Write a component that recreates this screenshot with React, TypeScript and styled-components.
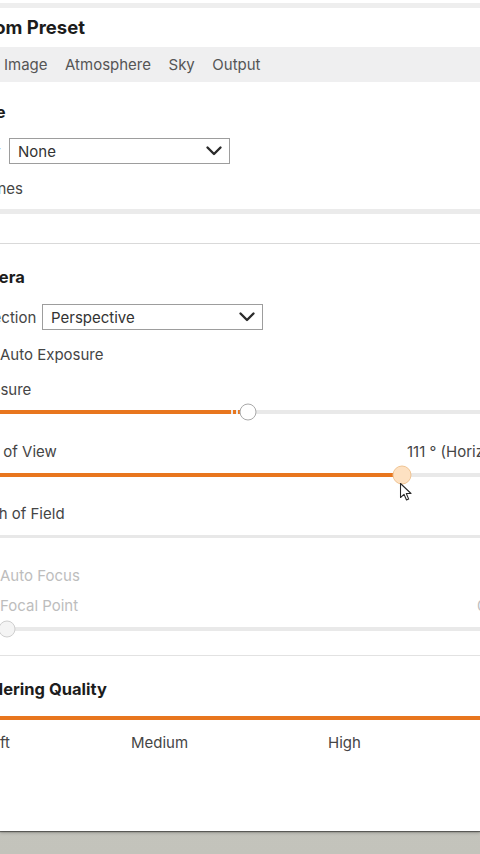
import React from 'react';
import styled, { createGlobalStyle } from 'styled-components';

const ORANGE = '#e8761e';

const GlobalStyle = createGlobalStyle`
    html, body {
        margin: 0;
        padding: 0;
        height: 100%;
        overflow: hidden;
    }
    body {
        background: linear-gradient(180deg, #b9b9b1 0%, #cfcfc7 40%, #c3c3bb 100%);
        font-family: Inter, 'Noto Sans', Arial, sans-serif;
    }
`;

const Panel = styled.div`
    width: 480px;
    height: 831px;
    background: #fff;
    overflow: hidden;
    box-shadow: 0 1px 1px rgba(0, 0, 0, 0.45), 0 2px 3px rgba(0, 0, 0, 0.2);
`;

// the panel is scrolled sideways, so the content starts left of the window
const Content = styled.div`
    width: 540px;
    margin-left: -40px;
    display: flex;
    flex-direction: column;
`;

const TopBand = styled.div`
    height: 5px;
    margin-top: 3px;
    background: #eeeeee;
`;

const Title = styled.h1`
    margin: 7px 0 0 -8px;
    font-size: 18.5px;
    font-weight: 700;
    line-height: 24px;
    color: #1c1c1c;
    white-space: nowrap;
`;

const TabBar = styled.div`
    display: flex;
    align-items: center;
    height: 35px;
    margin-top: 8px;
    padding-left: 35px;
    background: #efeff0;
`;

const Tab = styled.div`
    padding: 0 8.5px 0 9px;
    font-size: 15px;
    color: #555;
    white-space: nowrap;
`;

const SectionTitle = styled.h2<{ $mt: number; $indent?: number }>`
    margin: ${p => p.$mt}px 0 0;
    padding-left: ${p => p.$indent ?? 4}px;
    font-size: 16.5px;
    font-weight: 700;
    line-height: 24px;
    color: #1c1c1c;
    white-space: nowrap;
`;

const Row = styled.div<{ $mt: number; $h?: number }>`
    display: flex;
    align-items: center;
    height: ${p => p.$h ?? 24}px;
    margin-top: ${p => p.$mt}px;
    padding-left: 5px;
    white-space: nowrap;
`;

const SplitRow = styled.div<{ $mt: number; $split: number }>`
    display: grid;
    grid-template-columns: ${p => p.$split}px 1fr;
    align-items: center;
    height: 24px;
    margin-top: ${p => p.$mt}px;
    white-space: nowrap;
`;

const Label = styled.span<{ $w?: number; $muted?: boolean; $indent?: number }>`
    display: inline-block;
    ${p => (p.$w ? `width: ${p.$w}px;` : '')}
    padding-left: ${p => p.$indent ?? 0}px;
    font-size: 15px;
    color: ${p => (p.$muted ? '#bdbdbd' : '#454545')};
`;

const Value = styled.span<{ $muted?: boolean }>`
    font-size: 15px;
    color: ${p => (p.$muted ? '#bdbdbd' : '#454545')};
`;

const SelectBox = styled.div`
    box-sizing: border-box;
    width: 221px;
    height: 26px;
    display: flex;
    align-items: center;
    justify-content: space-between;
    padding: 0 6px 0 8px;
    border: 1px solid #9d9d9d;
    background: #fff;
    font-size: 15px;
    color: #333;
`;

const Switch = styled.span`
    width: 30px;
    height: 16px;
    margin-right: 5px;
    border-radius: 8px;
    background: #d6d6d6;
`;

const ThickRule = styled.div<{ $mt: number }>`
    height: 5px;
    margin-top: ${p => p.$mt}px;
    background: #ebebeb;
`;

const Rule = styled.div<{ $mt: number; $h?: number; $color?: string }>`
    height: ${p => p.$h ?? 1}px;
    margin-top: ${p => p.$mt}px;
    background: ${p => p.$color ?? '#dedede'};
`;

const SliderWrap = styled.div<{ $mt: number }>`
    position: relative;
    height: 18px;
    margin: ${p => p.$mt}px 0 0 5px;
`;

const Rail = styled.div`
    position: absolute;
    left: 0;
    right: 0;
    top: 7px;
    height: 4px;
    background: #e9e9e9;
`;

const Fill = styled.div`
    position: absolute;
    left: 0;
    top: 7px;
    height: 4px;
    background: ${ORANGE};
`;

const DashTail = styled.div`
    position: absolute;
    top: 7px;
    height: 4px;
    width: 12px;
    background: repeating-linear-gradient(90deg, ${ORANGE} 0 3px, transparent 3px 5px);
`;

type ThumbKind = 'idle' | 'active' | 'disabled';

const Thumb = styled.div<{ $kind: ThumbKind }>`
    position: absolute;
    top: 50%;
    box-sizing: border-box;
    width: ${p => (p.$kind === 'active' ? 19 : 17)}px;
    height: ${p => (p.$kind === 'active' ? 19 : 17)}px;
    border-radius: 50%;
    transform: translate(-50%, -50%);
    background: ${p => (p.$kind === 'active' ? '#fde1c2' : p.$kind === 'disabled' ? '#f4f4f4' : '#fff')};
    border: 1px solid ${p => (p.$kind === 'active' ? '#f0c493' : p.$kind === 'disabled' ? '#cfcfcf' : '#a9a9a9')};
`;

const Cursor = styled.svg`
    position: absolute;
    left: 6px;
    top: 16px;
`;

const QualityLabels = styled.div`
    display: grid;
    grid-template-columns: 156px 197px 1fr;
    margin-top: 10px;
    padding-left: 15px;
    height: 24px;
    align-items: center;
    font-size: 15px;
    color: #454545;
    white-space: nowrap;
`;

const Chevron = () => (
    <svg width="18" height="16" viewBox="0 0 18 16" fill="none">
        <polyline points="2.5,4.5 9,11 15.5,4.5" stroke="#2b2b2b" strokeWidth="2.4" strokeLinecap="round" strokeLinejoin="round" />
    </svg>
);

const Slider = ({ mt, pct, fill, dashed, kind, cursor }: { mt: number; pct: number; fill?: number; dashed?: boolean; kind: ThumbKind; cursor?: boolean }) => {
    const fillPct = fill ?? pct;
    return (
        <SliderWrap $mt={mt}>
            <Rail />
            {kind !== 'disabled' && <Fill style={{ width: `${fillPct}%` }} />}
            {dashed && <DashTail style={{ left: `${fillPct}%` }} />}
            <Thumb $kind={kind} style={{ left: `${pct}%` }}>
                {cursor && (
                    <Cursor width="13" height="19" viewBox="0 0 13 19">
                        <path d="M1 1 L1 15 L4.5 11.8 L7 17.5 L9.2 16.6 L6.8 11 L11.5 11 Z" fill="#fff" stroke="#2a2a2a" strokeWidth="1.1" strokeLinejoin="round" />
                    </Cursor>
                )}
            </Thumb>
        </SliderWrap>
    );
};

const App = () => {
    return (
        <>
            <GlobalStyle />
            <Panel>
                <Content>
                    <TopBand />
                    <Title>Custom Preset</Title>
                    <TabBar>
                        <Tab>Image</Tab>
                        <Tab>Atmosphere</Tab>
                        <Tab>Sky</Tab>
                        <Tab>Output</Tab>
                    </TabBar>

                    <SectionTitle $mt={18}>Style</SectionTitle>
                    <Row $mt={14} $h={26}>
                        <Label $w={44}>Filter</Label>
                        <SelectBox>
                            None
                            <Chevron />
                        </SelectBox>
                    </Row>
                    <Row $mt={12}>
                        <Label>Outlines</Label>
                    </Row>
                    <ThickRule $mt={9} />
                    <Rule $mt={29} $color="#d9d9d9" />

                    <SectionTitle $mt={21} $indent={2}>Camera</SectionTitle>
                    <Row $mt={15} $h={26}>
                        <Label $w={77}>Projection</Label>
                        <SelectBox>
                            Perspective
                            <Chevron />
                        </SelectBox>
                    </Row>
                    <Row $mt={12}>
                        <Switch />
                        <Label>Auto Exposure</Label>
                    </Row>
                    <Row $mt={11}>
                        <Label>Exposure</Label>
                    </Row>
                    <Slider mt={2} pct={52.9} fill={49.2} dashed kind="idle" />
                    <SplitRow $mt={18} $split={447}>
                        <Label $indent={5}>Field of View</Label>
                        <Value>111 ° (Horizontal)</Value>
                    </SplitRow>
                    <Slider mt={3} pct={81.7} kind="active" cursor />
                    <Row $mt={17}>
                        <Label>Depth of Field</Label>
                    </Row>
                    <Rule $mt={10} $h={3} $color="#e8e8e8" />

                    <Row $mt={25}>
                        <Switch />
                        <Label $muted>Auto Focus</Label>
                    </Row>
                    <SplitRow $mt={6} $split={517}>
                        <Label $muted $indent={40}>Focal Point</Label>
                        <Value $muted>0</Value>
                    </SplitRow>
                    <Slider mt={3} pct={7.85} kind="disabled" />
                    <Rule $mt={17} $color="#e2e2e2" />

                    <SectionTitle $mt={21} $indent={2}>Rendering Quality</SectionTitle>
                    <Rule $mt={15} $h={4} $color={ORANGE} />
                    <QualityLabels>
                        <span>Draft</span>
                        <span>Medium</span>
                        <span>High</span>
                    </QualityLabels>
                </Content>
            </Panel>
        </>
    );
};

export default App;
